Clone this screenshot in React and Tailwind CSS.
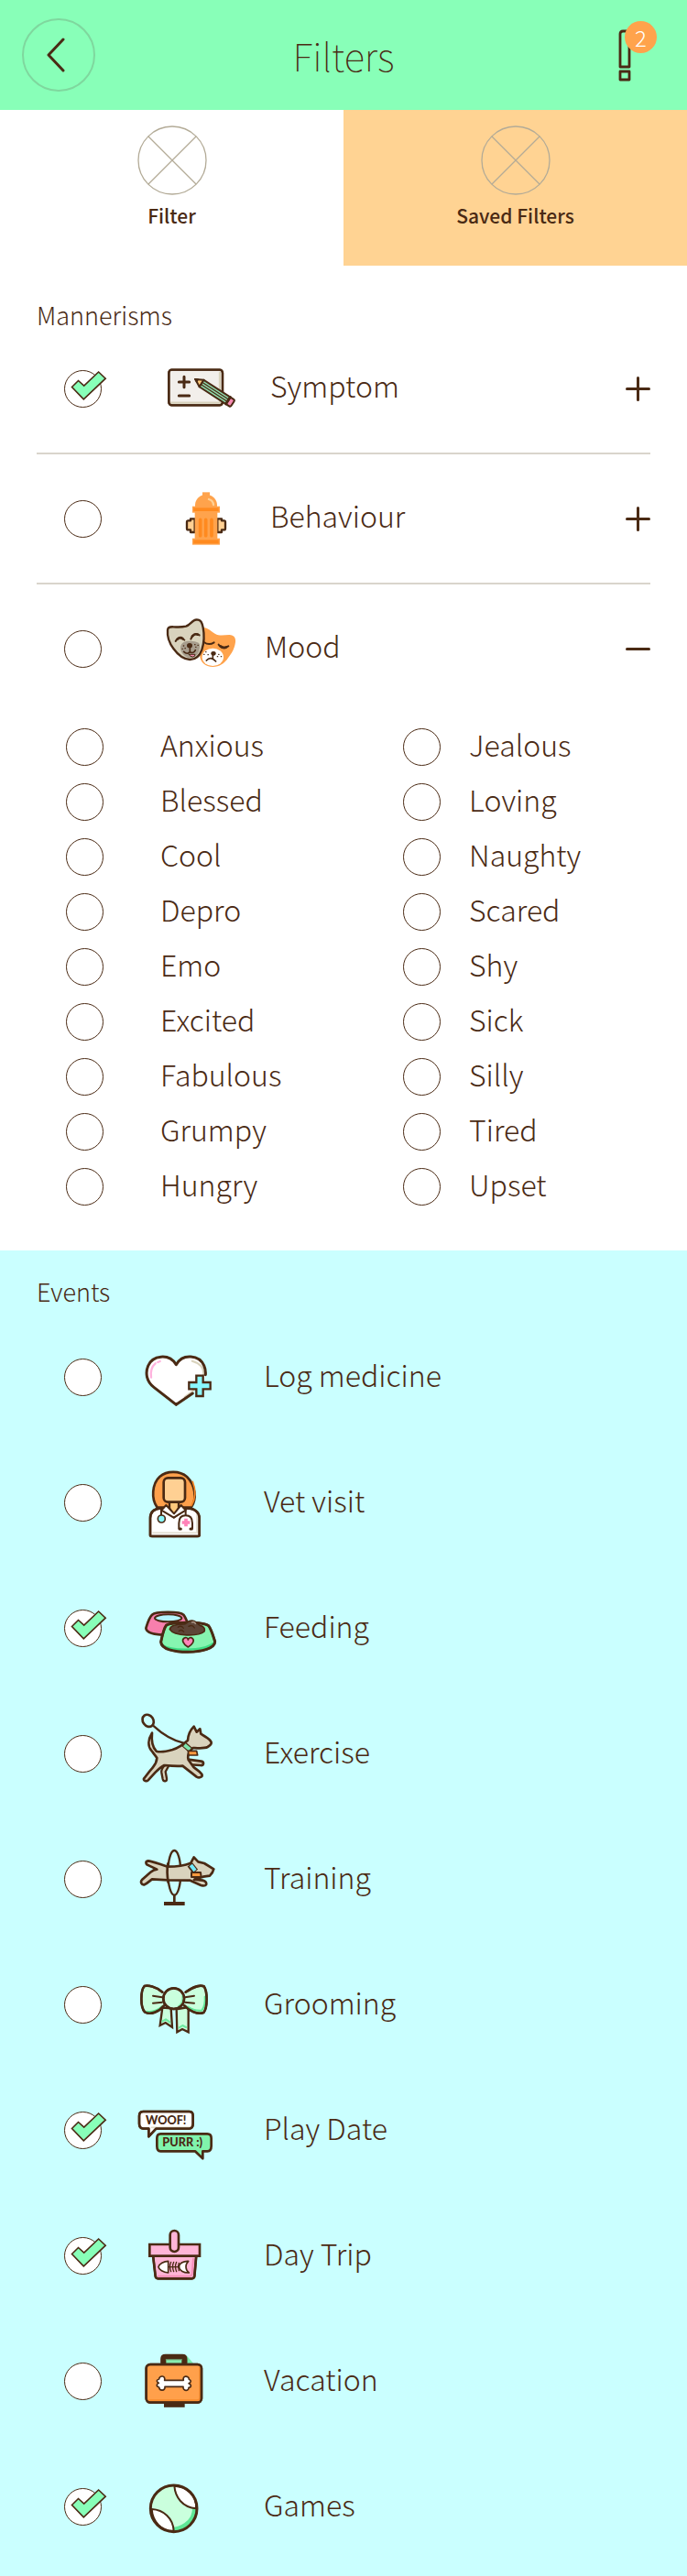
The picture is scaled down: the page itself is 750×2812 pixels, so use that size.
import { useState } from "react";

const INK = "#4a2a14";

function Icon({ box, children }) {
  return (
    <svg
      viewBox={box}
      className="h-[100px] w-[110px] shrink-0"
      fill="none"
      stroke={INK}
      strokeWidth="7"
      strokeLinecap="round"
      strokeLinejoin="round"
      aria-hidden="true"
    >
      {children}
    </svg>
  );
}

function SymptomIcon() {
  return (
    <Icon box="495 224 330 300">
      <rect x="553" y="313" width="176" height="116" rx="10" fill="#f2efeb" />
      <path d="M560 421h160V322" stroke="#d9d3bd" strokeWidth="7" />
      <rect x="553" y="313" width="176" height="116" rx="10" />
      <path d="M603 336v34M586 353h34M586 398h34" strokeWidth="9" />
      <g transform="translate(638 343) rotate(33) scale(1.02)">
        <path d="M2 0 26-13V13Z" fill="#ffc97c" strokeWidth="6" />
        <path d="M0 0 10-5V5Z" fill={INK} strokeWidth="4" />
        <path d="M26-13H128V13H26Z" fill="#8fdcae" strokeWidth="6" />
        <path d="M28-4H124M28 4H124" strokeWidth="4" />
        <path d="M128-13h12q5 0 5 5V8q0 5-5 5H128Z" fill="#f78bb4" strokeWidth="6" />
        <path d="M127-13V13" strokeWidth="8" />
      </g>
    </Icon>
  );
}

function HydrantIcon() {
  return (
    <Icon box="495 646 330 300">
      <path d="M638 797h-14v6h-8q-4 0-4 5v20q0 5 4 5h8v8h14zM712 797h14v6h8q4 0 4 5v20q0 5-4 5h-8v8h-14z" fill="#ffd093" strokeWidth="7" />
      <g stroke="none">
        <path d="M663 710h24v12h-24z" fill="#ffa34c" />
        <path d="M639 758v-6a36 34 0 0 1 72 0v6z" fill="#ffa34c" />
        <path d="M638 775h74v90h-74z" fill="#ffa34c" />
        <rect x="630" y="756" width="90" height="21" fill="#ffa34c" />
        <rect x="634" y="761" width="82" height="11" fill="#ff8a1f" />
        <rect x="630" y="861" width="90" height="21" fill="#ffa34c" />
        <rect x="634" y="866" width="82" height="12" fill="#ff8a1f" />
      </g>
      <path d="M656 800v52M674 800v52M693 800v52" stroke="#ff8a1f" strokeWidth="11" />
      <path d="M684 733q14 4 15 18" stroke="#ffd093" strokeWidth="7" />
    </Icon>
  );
}

function MasksIcon() {
  return (
    <Icon box="495 1077 330 300">
      <path d="M666 1158c12 0 22 10 38 20 17 10 31 4 47 4 14 0 22 10 20 24-3 24-14 38-24 52-12 18-28 29-50 29-24 0-41-14-43-38Z" fill="#ffa34c" stroke="none" />
      <ellipse cx="697" cy="1255" rx="35" ry="29" fill="#fff" stroke="none" />
      <path d="M668 1206q16 12 33 1M716 1214q10 16 32 5" strokeWidth="6" />
      <path d="M722 1219q10 9 20 3" strokeWidth="8" />
      <ellipse cx="699" cy="1243" rx="8" ry="7" fill={INK} stroke="none" />
      <path d="M697 1248v10M676 1266q14-16 31 3" strokeWidth="5" />
      <path d="M674 1238h1M668 1246h1M681 1247h1M716 1246h1M712 1253h1M724 1253h1" strokeWidth="4" />
      <path
        d="M549 1166c1-10 9-11 20-10 13 1 27 1 40-2 14-4 20-21 35-22 15 0 18 12 21 26 5 26 4 49-4 73-7 20-19 32-39 32-21-1-41-18-54-36-15-20-21-39-19-61Z"
        fill="#d9d3bd"
      />
      <path d="M591 1222c2-14 14-21 29-20 17 0 32 3 34 12 3 20-9 43-30 44-18 0-34-17-33-36Z" fill="#a79d8d" stroke="none" />
      <path d="M575 1203q12-21 29-4M625 1196q10-25 28-13" strokeWidth="6" />
      <path d="M581 1196q9-8 18-1M630 1186q8-9 17-5" strokeWidth="8" />
      <path d="M619 1246h20q0 8-8 8-9 0-12-8Z" fill="#f78bb4" strokeWidth="3" />
      <ellipse cx="621" cy="1217" rx="9" ry="8" fill={INK} stroke="none" />
      <path d="M622 1224v14M602 1237q11 11 20 1 12 7 18-6" strokeWidth="5" />
      <path d="M601 1218h1M606 1226h1M597 1228h1M638 1214h1M641 1222h1M648 1216h1" strokeWidth="4" />
    </Icon>
  );
}

function HeartIcon() {
  return (
    <Icon box="0 -15 330 300">
      <path d="M157 223 84 166C60 147 55 120 65 96c14-34 68-43 92-4 22-39 76-31 91 3 10 24 5 52-18 72Z" fill="#fff" stroke="none" />
      <path d="M209 80q45 13 36 52-7 27-36 48l-24 18" stroke="#d9d3bd" strokeWidth="6" />
      <path d="M157 223 84 166C60 147 55 120 65 96c14-34 68-43 92-4 22-39 76-31 91 3 4 9 6 19 5 30M157 223l54-37" strokeWidth="9" />
      <path d="M75 134c-3-21 2-36 14-46M97 84l7-3" stroke="#ffb3de" strokeWidth="7" />
      <path d="M223 128h22v22h24v22h-24v23h-22v-23h-24v-22h24z" fill="#8af8ff" strokeLinejoin="miter" />
    </Icon>
  );
}

function VetIcon() {
  return (
    <Icon box="0 6 330 300">
      <path d="M95 170C74 142 78 92 103 69c24-21 66-20 89 0 28 27 34 73 14 101Z" fill="#ffa04b" strokeWidth="8" />
      <path d="M211 85q17 43-4 79" stroke="#f68625" strokeWidth="5" />
      <path d="M135 150v22l15 28 15-28v-22Z" fill="#ffc97c" />
      <path d="M72 261V205c0-20 11-31 34-33l44 30 42-30c24 0 41 13 41 33v56q0 3-7 3H79q-7 0-7-3Z" fill="#fff" />
      <path d="M225 190v63H82" stroke="#e6e2d6" strokeWidth="6" />
      <path d="M124 162l-15 17 40 24 39-24-15-17-23 28Z" fill="#fff" strokeWidth="6" />
      <rect x="116" y="73" width="70" height="79" rx="14" fill="#ffd093" strokeWidth="8" />
      <path d="M72 261V205c0-20 11-31 34-33M192 172c24 0 41 13 41 33v56q0 3-7 3H79q-7 0-7-3" strokeWidth="8" />
      <path d="M108 178v18M188 178v16" strokeWidth="6" />
      <circle cx="109" cy="207" r="12" fill="#8af8ff" strokeWidth="5" />
      <path d="M166 238v-17q0-25 22-25t22 25v17" strokeWidth="6" />
      <path d="M168 240h4M204 240h4" strokeWidth="9" />
      <path d="M189 206v26M176 219h26" stroke="#ff82b8" strokeWidth="11" strokeLinecap="butt" />
    </Icon>
  );
}

function FeedingIcon() {
  return (
    <Icon box="0 -33 330 300">
      <path d="M78 71c12-11 90-12 103 0 8 10 12 24 17 37-2 15-35 29-71 29-34 0-67-4-69-22 5-16 10-35 20-44Z" fill="#f77fad" strokeWidth="8" />
      <ellipse cx="131" cy="82" rx="44" ry="12" fill="#b5f5ff" strokeWidth="6" />
      <path d="M125 105c18-11 120-12 138 2 10 13 16 36 21 52 0 22-43 34-89 34-43 0-87-9-88-33 4-19 9-44 18-55Z" fill="#86f5b0" />
      <path d="M113 171c23 19 132 21 164-5" stroke="#3fdd85" strokeWidth="8" />
      <path d="M125 105c18-11 120-12 138 2 10 13 16 36 21 52 0 22-43 34-89 34-43 0-87-9-88-33 4-19 9-44 18-55Z" strokeWidth="9" />
      <path d="M136 119c2-15 30-17 45-17 10 0 13-12 27-12 12 0 18 10 27 16 13 2 17 12 14 20-17 16-98 17-113-7Z" fill="#5d4537" strokeWidth="5" />
      <path d="M163 112q10-8 18 3M198 109q12-7 19 5M166 125q7-8 16 2" strokeWidth="4" />
      <path d="M209 96q7-3 11 4" stroke="#a58f81" strokeWidth="5" />
      <path d="M196 177c-18-11-22-24-12-30 6-3 11 0 12 6 2-7 9-9 14-5 9 8 0 20-14 29Z" fill="#ff82b8" strokeWidth="5" />
    </Icon>
  );
}

function ExerciseIcon() {
  return (
    <Icon box="0 18 330 300">
      <ellipse cx="65" cy="58" rx="17" ry="21" transform="rotate(-35 65 58)" strokeWidth="8" />
      <path d="M84 76q45 42 97 55" strokeWidth="7" />
      <path d="M190 184l49 7q8 2 7 8-1 6-9 5l-48-3Z" fill="#d9d3bd" strokeWidth="8" />
      <path d="M125 200c-10 8-18 16-16 28l4 21q2 8 8 7 6-1 5-9l-4-22 10-18Z" fill="#d9d3bd" />
      <path
        d="M78 98c-14 22-14 44-2 58 6 8 12 15 18 24-1 18-8 24-16 34-12 13-20 26-27 34-2 8 10 9 14 5l24-26c13-13 21-19 29-23 20 2 39 4 60 2l46 36c9 5 21 0 17-9-7-10-18-15-27-23l-17-24c-3-10-1-19 4-28l11-11c18 1 37 3 48-3 8-5 13-11 12-15-4-13-21-18-34-28l-3-16-11 10-9-18c-11 11-19 30-20 45-14 13-31 25-50 31-21 6-43 8-53 5-12-12-17-31-14-60Z"
        fill="#d9d3bd"
        strokeWidth="8"
      />
      <path d="M181 134l23 20" stroke={INK} strokeWidth="19" strokeLinecap="butt" />
      <path d="M184 137l18 15" stroke="#7de8ad" strokeWidth="12" strokeLinecap="butt" />
      <path d="M196 157h28l3 14h-29Z" fill="#ff9a3e" strokeWidth="5" />
    </Icon>
  );
}

function TrainingIcon() {
  return (
    <Icon box="0 9 330 300">
      <ellipse cx="151" cy="136" rx="21" ry="73" />
      <path
        d="M205 104l10-19 14 15 20 5 31 19c-2 10-7 16-13 22l-22 3-29 9 28 3c10 2 13 8 11 14-3 5-10 4-17 2l-35-16-73-1-52-3c-9 7-16 14-25 18-10 2-14-9-8-16l28-25c10-8 15-9 21-9l-27-13c-10-3-12-13-2-15 14 1 40 12 64 19 23 0 49-1 76-12Z"
        fill="#d9d3bd"
        strokeWidth="8"
      />
      <path d="M130 106q-5 26 1 62" strokeWidth="8" />
      <path d="M202 109l18 23" stroke={INK} strokeWidth="21" strokeLinecap="butt" />
      <path d="M205 111l14 18" stroke="#72ebff" strokeWidth="12" strokeLinecap="butt" />
      <path d="M207 135h30l2 15h-32Z" fill="#ff9a3e" strokeWidth="6" />
      <path d="M151 211v25" strokeWidth="8" />
      <path d="M117 237h68" strokeWidth="12" strokeLinecap="butt" />
    </Icon>
  );
}

function BowIcon() {
  return (
    <Icon box="0 -30 330 300">
      <path d="M112 128l-8 58 18-9 22 15-4-62Z" fill="#caffdd" strokeLinejoin="miter" />
      <path d="M112 172l11-6 13 9" stroke="#6dea9f" strokeWidth="6" />
      <path d="M158 133l2 75 17-10 20 10V126Z" fill="#caffdd" strokeLinejoin="miter" />
      <path d="M167 193l11-7 11 6" stroke="#6dea9f" strokeWidth="6" />
      <path d="M112 77C90 58 65 54 53 57c-13 15-14 68 1 85 20 11 48-2 62-20M188 77c25-18 48-24 60-19 12 17 12 70-1 86-21 8-47-6-63-23" fill="#caffdd" />
      <path d="M61 140q25 5 50-16M195 125q22 15 46 12 12-16 10-45" stroke="#62e698" strokeWidth="6" />
      <path d="M112 77C90 58 65 54 53 57c-13 15-14 68 1 85 20 11 48-2 62-20M188 77c25-18 48-24 60-19 12 17 12 70-1 86-21 8-47-6-63-23" strokeWidth="8" />
      <circle cx="149" cy="98" r="34" fill="#caffdd" />
      <path d="M164 123q15-10 13-34" stroke="#8cf0b2" strokeWidth="5" />
      <circle cx="149" cy="98" r="34" strokeWidth="8" />
      <path d="M81 89l30 5M81 113l30-3M216 89l-30 5M216 113l-30-3" strokeWidth="6" />
    </Icon>
  );
}

function PlayDateIcon() {
  return (
    <Icon box="0 -9 330 300">
      <path d="M49 78H200q12 0 12 14v26q0 15-12 16H91l-24 26V134H49q-13-1-13-16V92q0-14 13-14Z" fill="#fff" />
      <path d="M76 130H200q7 0 7-9" stroke="#e2dcc8" strokeWidth="5" />
      <path d="M49 78H200q12 0 12 14v26q0 15-12 16H91l-24 26V134H49q-13-1-13-16V92q0-14 13-14Z" strokeWidth="8" />
      <path d="M106 151H259q13 0 13 14v26q0 16-13 17H244v24l-25-24H106q-12-1-12-17V165q0-14 12-14Z" fill="#80f4ac" strokeWidth="8" />
      <g fill={INK} stroke="none" fontFamily="Lato, sans-serif" fontWeight="900" fontSize="38">
        <text x="57" y="120">WOOF!</text>
        <text x="112" y="191">PURR :)</text>
      </g>
    </Icon>
  );
}

function BasketIcon() {
  return (
    <Icon box="0 402 330 300">
      <path d="M81 548h142l-6 69q-1 8-9 8H98q-8 0-9-8Z" fill="#ffb5d7" />
      <path d="M213 560l-4 50q-1 7-8 7H98" stroke="#f58eb9" strokeWidth="6" />
      <path d="M81 548h142l-6 69q-1 8-9 8H98q-8 0-9-8Z" strokeWidth="8" />
      <path d="M70 513h164v38H70Z" fill="#ffb5d7" strokeWidth="8" strokeLinejoin="miter" />
      <rect x="137" y="468" width="28" height="69" rx="14" fill="#ffb5d7" strokeWidth="8" />
      <path d="M131 568v38c-16-1-31-10-32-19 2-10 18-19 32-19Z" fill="#fff" strokeWidth="5" />
      <path d="M197 568c-17-1-31 8-31 19 2 12 16 20 33 19-12-9-14-26-2-38Z" fill="#fff" strokeWidth="5" />
      <path d="M131 587h36M140 571q-7 15 0 31M149 571q-7 15 0 31M158 571q-7 15 0 31M166 574q-5 13 0 25" strokeWidth="4" />
    </Icon>
  );
}

function VacationIcon() {
  return (
    <Icon box="0 33 330 300">
      <path d="M192 98l21 24h-24Z" fill="#79edae" stroke="none" />
      <path d="M114 120v-12q0-7 8-7h55q8 0 8 7v12Z" fill="#87edb0" strokeWidth="17" />
      <path d="M124 117h51" stroke="#87edb0" strokeWidth="11" strokeLinecap="butt" />
      <path d="M117 259h68" strokeWidth="15" strokeLinecap="butt" />
      <rect x="59" y="126" width="181" height="125" rx="13" fill="#ffa04b" />
      <path d="M69 243H224q10 0 10-9V135" stroke="#f88a2b" strokeWidth="4" />
      <rect x="59" y="126" width="181" height="125" rx="13" strokeWidth="8" />
      <path
        d="M119 178h62c-5-17 18-16 18-3 9 4 7 10-1 13 11 5 8 14 0 14 1 12-20 13-18-3h-60c2 15-18 15-19 2-10-2-9-11-1-14-8-5-9-10 1-13 1-13 22-12 18 4Z"
        fill="#fff"
        strokeWidth="5"
      />
    </Icon>
  );
}

function BallIcon() {
  return (
    <Icon box="0 444 330 300">
      <circle cx="149" cy="598" r="76" fill="#caffdd" stroke="none" />
      <path d="M217 600q-2 26-16 40-22 22-50 26" stroke="#5ee796" strokeWidth="14" />
      <path d="M151 524c3 38 27 70 71 74 4-39-27-72-71-74Z" fill="#fff" strokeWidth="6" />
      <path d="M77 600c39 2 70 30 72 71-39 2-69-29-72-71Z" fill="#fff" strokeWidth="6" />
      <circle cx="149" cy="598" r="76" strokeWidth="9" />
    </Icon>
  );
}

function Tick({ id, defaultChecked = false }) {
  return (
    <span className="relative size-[41px] shrink-0">
      <input
        id={id}
        type="checkbox"
        defaultChecked={defaultChecked}
        className="peer block size-full cursor-pointer appearance-none rounded-full border border-[#4a2a14] bg-white"
      />
      <svg
        viewBox="0 0 48 41"
        className="pointer-events-none invisible absolute top-0 left-0 h-[41px] w-12 peer-checked:visible"
        aria-hidden="true"
      >
        <path d="M8.5 18.5 15.5 11.5 21.7 17.2 37.6 2 45.2 9.2 21.3 31.8Z" fill="#88ffb8" stroke={INK} strokeWidth="1.6" />
      </svg>
    </span>
  );
}

const MANNERISMS = [
  { name: "Symptom", Art: SymptomIcon, checked: true },
  { name: "Behaviour", Art: HydrantIcon },
  { name: "Mood", Art: MasksIcon },
];

const MOODS = [
  ["Anxious", "Blessed", "Cool", "Depro", "Emo", "Excited", "Fabulous", "Grumpy", "Hungry"],
  ["Jealous", "Loving", "Naughty", "Scared", "Shy", "Sick", "Silly", "Tired", "Upset"],
];

const EVENTS = [
  { name: "Log medicine", Art: HeartIcon },
  { name: "Vet visit", Art: VetIcon },
  { name: "Feeding", Art: FeedingIcon, checked: true },
  { name: "Exercise", Art: ExerciseIcon },
  { name: "Training", Art: TrainingIcon },
  { name: "Grooming", Art: BowIcon },
  { name: "Play Date", Art: PlayDateIcon, checked: true },
  { name: "Day Trip", Art: BasketIcon, checked: true },
  { name: "Vacation", Art: VacationIcon },
  { name: "Games", Art: BallIcon, checked: true },
];

function TabButton({ label, active, onClick }) {
  return (
    <button
      type="button"
      role="tab"
      aria-selected={active}
      onClick={onClick}
      className={`flex h-[170px] flex-1 cursor-pointer flex-col items-center gap-1.5 pt-[17px] text-[21px] leading-8 font-medium ${active ? "bg-white" : "bg-[#ffd393]"}`}
    >
      <svg viewBox="0 0 76 76" className="size-[76px]" fill="none" stroke="#b3ab97" strokeWidth="1.3" aria-hidden="true">
        <circle cx="38" cy="38" r="37" />
        <path d="M12 12 64 64M64 12 12 64" />
      </svg>
      {label}
    </button>
  );
}

function MoodList() {
  return (
    <div className="mt-[27px] grid grid-cols-[15fr_11fr] pl-8">
      {MOODS.map((column, i) => (
        <ul key={i}>
          {column.map((mood) => (
            <li key={mood} className={`flex h-[60px] items-center ${i === 0 ? "gap-[62px]" : "gap-[31px]"}`}>
              <Tick id={mood} />
              <label htmlFor={mood} className="pb-1.5">{mood}</label>
            </li>
          ))}
        </ul>
      ))}
    </div>
  );
}

export default function App() {
  const [tab, setTab] = useState("Filter");
  const [open, setOpen] = useState("Mood");

  return (
    <div className="min-h-screen bg-white font-['Noto_Sans_CJK_SC','Noto_Sans',sans-serif] text-[32px] leading-10 font-light text-[#4a2a14]">
      <header className="grid h-[120px] grid-cols-[1fr_auto_1fr] items-center bg-[#88ffb8] px-6">
        <button
          type="button"
          aria-label="Back"
          className="flex size-20 cursor-pointer items-center justify-center rounded-full border-2 border-[#7fd79e]"
        >
          <svg viewBox="0 0 20 38" className="mr-1.5 h-[38px] w-5" fill="none" stroke={INK} strokeWidth="3" strokeLinecap="round" strokeLinejoin="round" aria-hidden="true">
            <path d="M18 2 2 19 18 36" />
          </svg>
        </button>
        <h1 className="text-[42px] leading-[60px] font-thin">Filters</h1>
        <button type="button" aria-label="Alerts" className="relative mr-[37px] flex cursor-pointer justify-self-end">
          <svg viewBox="0 0 14 58" className="h-[58px] w-3.5" fill="none" stroke={INK} strokeWidth="2.8" strokeLinejoin="round" aria-hidden="true">
            <path d="M2 6q0-3 3-3H12V42H2ZM2 47H12V56H2Z" />
          </svg>
          <span className="absolute -top-2 -right-7 flex size-[35px] items-center justify-center rounded-full bg-[#ffa34c] text-[24px] leading-8 text-white">
            2
          </span>
        </button>
      </header>

      <div role="tablist" className="flex">
        {["Filter", "Saved Filters"].map((name) => (
          <TabButton key={name} label={name} active={tab === name} onClick={() => setTab(name)} />
        ))}
      </div>

      <main>
        <section className="px-10 pt-[34px] pb-10">
          <h2 className="text-[27px] leading-10">Mannerisms</h2>
          <div className="-mt-2.5 divide-y-2 divide-[#d9d5cc]">
            {MANNERISMS.map(({ name, Art, checked }) => (
              <div key={name} className="flex items-center py-5 pl-[30px] last:pb-0">
                <Tick id={name} defaultChecked={checked} />
                <span className="ml-[54px] flex">
                  <Art />
                </span>
                <label htmlFor={name} className={`flex-1 pb-2 ${open === name ? "pl-3.5" : "pl-5"}`}>
                  {name}
                </label>
                <button
                  type="button"
                  aria-label={`Toggle ${name}`}
                  aria-expanded={open === name}
                  onClick={() => setOpen(open === name ? "" : name)}
                  className="cursor-pointer"
                >
                  <svg viewBox="0 0 27 27" className="size-[27px]" fill="none" stroke={INK} strokeWidth="3" strokeLinecap="round" aria-hidden="true">
                    <path d={open === name ? "M1.5 13.5H25.5" : "M1.5 13.5H25.5M13.5 1.5V25.5"} />
                  </svg>
                </button>
              </div>
            ))}
          </div>
          {open === "Mood" && <MoodList />}
        </section>

        <section className="bg-[#caffff] px-10 pt-[25px] pb-2">
          <h2 className="text-[27px] leading-10">Events</h2>
          <ul className="mt-[5px]">
            {EVENTS.map(({ name, Art, checked }) => (
              <li key={name} className="flex h-[137px] items-center pl-[30px]">
                <Tick id={name} defaultChecked={checked} />
                <span className="ml-[29px] flex">
                  <Art />
                </span>
                <label htmlFor={name} className="pb-2 pl-[38px]">{name}</label>
              </li>
            ))}
          </ul>
        </section>
      </main>
    </div>
  );
}
